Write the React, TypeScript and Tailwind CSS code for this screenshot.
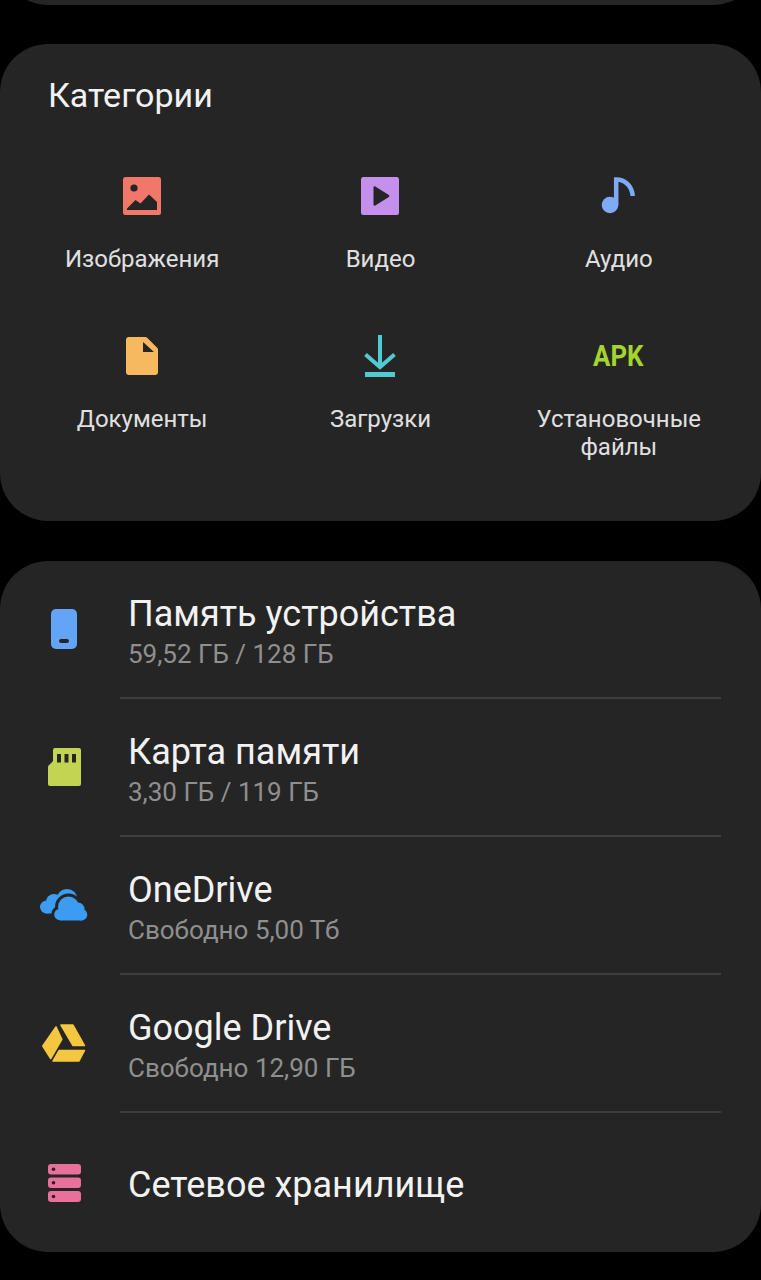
import type { ReactNode } from "react";

const bodyFont = { fontFamily: "Roboto, sans-serif" };

function ImageIcon() {
  return (
    <svg width="38" height="38" viewBox="0 0 38 38">
      <rect width="38" height="38" rx="2.5" fill="#f1776b" />
      <circle cx="11" cy="11" r="3.6" fill="#252525" />
      <path d="M4 33v-1.500l8.500-8.500 5 3.500L26 17.500l8 7.500V33z" fill="#252525" />
    </svg>
  );
}

function VideoIcon() {
  return (
    <svg width="38" height="38" viewBox="0 0 38 38">
      <rect width="38" height="38" rx="2.5" fill="#c490ec" />
      <path d="M12.500 10.500c0-1 1-1.500 1.800-1l13.500 8.500c.8.500.8 1.500 0 2l-13.500 8.500c-.8.500-1.800 0-1.800-1z" fill="#252525" />
    </svg>
  );
}

function MusicIcon() {
  return (
    <svg width="36" height="38" viewBox="0 0 36 38">
      <circle cx="9" cy="28" r="8.300" fill="#7eaaf8" />
      <path d="M15.200 28V2.500c9 0 16 7 16.500 16.500" fill="none" stroke="#7eaaf8" strokeWidth="4.500" />
    </svg>
  );
}

function DocumentIcon() {
  return (
    <svg width="32" height="38" viewBox="0 0 32 38">
      <path d="M3 0h16.500a2 2 0 0 1 1.400.6l10.500 10.500a2 2 0 0 1 .6 1.400V35a3 3 0 0 1-3 3H3a3 3 0 0 1-3-3V3a3 3 0 0 1 3-3z" fill="#f7b960" />
      <path d="M17 5v10h11z" fill="#252525" />
    </svg>
  );
}

function DownloadIcon() {
  return (
    <svg width="34" height="44" viewBox="0 0 34 44">
      <path d="M17 1v30M2.500 20.500 17 33l14.500-12.500" fill="none" stroke="#4fcbd1" strokeWidth="4" />
      <rect x="2" y="38" width="30" height="5" fill="#4fcbd1" />
    </svg>
  );
}

function ApkIcon() {
  return (
    <span className="block -translate-x-px scale-x-[0.86] text-[30px] leading-[38px] font-bold text-[#a4d52f]" style={bodyFont}>
      APK
    </span>
  );
}

function PhoneIcon() {
  return (
    <svg width="26" height="40" viewBox="0 0 26 40">
      <rect width="26" height="40" rx="5" fill="#63a4f6" />
      <rect x="8" y="30" width="10" height="4" rx="2" fill="#252525" />
    </svg>
  );
}

function SdIcon() {
  return (
    <svg width="33" height="38" viewBox="0 0 33 38">
      <path d="M5 2a2 2 0 0 1 2-2h24a2 2 0 0 1 2 2v34a2 2 0 0 1-2 2H2a2 2 0 0 1-2-2V19a2 2 0 0 1 .6-1.400l3.800-3.800A2 2 0 0 0 5 12.400z" fill="#c3d453" />
      <rect x="9" y="6" width="4" height="8.500" fill="#252525" />
      <rect x="16.500" y="6" width="4" height="8.500" fill="#252525" />
      <rect x="24" y="6" width="4" height="8.500" fill="#252525" />
    </svg>
  );
}

function CloudIcon() {
  return (
    <svg width="48" height="32" viewBox="0 0 48 32" fill="#3c9cf0">
      {/* back cloud */}
      <circle cx="6.500" cy="18" r="6.500" />
      <circle cx="14" cy="13" r="8" />
      <circle cx="27" cy="10.500" r="10.500" />
      <rect x="6" y="14" width="20" height="10.500" />
      {/* gap around the front cloud */}
      <g stroke="#252525" strokeWidth="6">
        <circle cx="20" cy="25.500" r="5.800" />
        <circle cx="28.500" cy="18" r="10.500" />
        <circle cx="38" cy="20" r="6.500" />
      </g>
      {/* front cloud */}
      <circle cx="20" cy="25.500" r="5.800" />
      <circle cx="28.500" cy="18" r="10.500" />
      <circle cx="38" cy="20" r="6.500" />
      <circle cx="41.500" cy="25.700" r="5.800" />
      <rect x="20" y="22" width="22" height="9.500" />
    </svg>
  );
}

function DriveIcon() {
  return (
    <svg width="44" height="38" viewBox="0 0 44 38" fill="#f5c63f" stroke="#f5c63f" strokeWidth="1.500" strokeLinejoin="round">
      <path d="M19 1h12l11.500 20.500H31z" />
      <path d="M14 2.800l5.800 12.500L8.700 34.500.8 22z" />
      <path d="M17 26.500h25.500L37 37H11z" />
    </svg>
  );
}

function ServerIcon() {
  return (
    <svg width="33" height="38" viewBox="0 0 33 38">
      <rect width="33" height="10.500" rx="3" fill="#e8709b" />
      <rect y="13.500" width="33" height="10.500" rx="3" fill="#e8709b" />
      <rect y="27" width="33" height="11" rx="3" fill="#e8709b" />
      <circle cx="5.500" cy="5.200" r="1.800" fill="#252525" />
      <circle cx="5.500" cy="18.800" r="1.800" fill="#252525" />
      <circle cx="5.500" cy="32.500" r="1.800" fill="#252525" />
    </svg>
  );
}

const categories: { icon: ReactNode; label: string[] }[] = [
  { icon: <ImageIcon />, label: ["Изображения"] },
  { icon: <VideoIcon />, label: ["Видео"] },
  { icon: <MusicIcon />, label: ["Аудио"] },
  { icon: <DocumentIcon />, label: ["Документы"] },
  { icon: <DownloadIcon />, label: ["Загрузки"] },
  { icon: <ApkIcon />, label: ["Установочные", "файлы"] },
];

const storages: { icon: ReactNode; title: string; sub?: string }[] = [
  { icon: <PhoneIcon />, title: "Память устройства", sub: "59,52 ГБ / 128 ГБ" },
  { icon: <SdIcon />, title: "Карта памяти", sub: "3,30 ГБ / 119 ГБ" },
  { icon: <CloudIcon />, title: "OneDrive", sub: "Свободно 5,00 Тб" },
  { icon: <DriveIcon />, title: "Google Drive", sub: "Свободно 12,90 ГБ" },
  { icon: <ServerIcon />, title: "Сетевое хранилище" },
];

export default function App() {
  return (
    <div className="h-[1280px] overflow-hidden bg-black" style={bodyFont}>
      {/* Card scrolled off the top */}
      <div className="-mt-[60px] h-[65px] rounded-b-[48px] bg-[#252525]" />

      {/* Categories */}
      <div className="mt-[39px] h-[477px] rounded-[48px] bg-[#252525]">
        <h2 className="pt-[31px] pl-[48px] text-[34px] leading-[40px] text-[#f2f2f2]">Категории</h2>
        <div className="mt-[62px] grid grid-cols-3 px-[23px]">
          {categories.map((c) => (
            <div key={c.label[0]} className="flex h-[160px] flex-col items-center">
              <div className="flex h-[38px] items-center justify-center">{c.icon}</div>
              <div className="mt-[30px] text-center text-[24px] leading-[28px] text-[#e0e0e0]">
                {c.label.map((line) => (
                  <div key={line}>{line}</div>
                ))}
              </div>
            </div>
          ))}
        </div>
      </div>

      {/* Storage list */}
      <div className="mt-[40px] h-[691px] rounded-[48px] bg-[#252525]">
        {storages.map((s, i) => (
          <div key={s.title}>
            <div className={i === 4 ? "flex h-[140px] items-center" : "flex h-[136px] items-center"}>
              <div className="flex w-[128px] shrink-0 justify-center">{s.icon}</div>
              <div className="pt-[4px]">
                <div className="text-[36px] leading-[40px] text-[#f2f2f2]">{s.title}</div>
                {s.sub && <div className="mt-[5px] text-[26px] leading-[30px] text-[#8f8f8f]">{s.sub}</div>}
              </div>
            </div>
            {i < 4 && <div className="mr-[40px] ml-[120px] h-[2px] bg-[#3d3d3d]" />}
          </div>
        ))}
      </div>
    </div>
  );
}
